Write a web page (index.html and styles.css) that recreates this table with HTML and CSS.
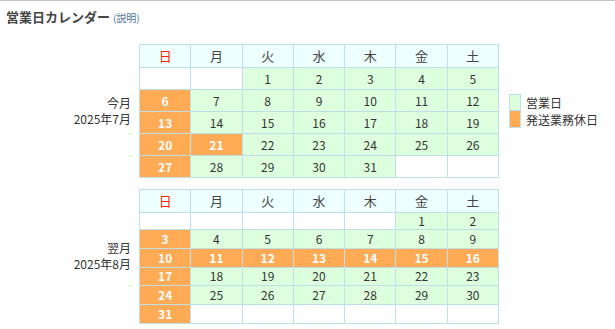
FILE: index.html
```html
<!DOCTYPE html>
<html lang="ja">
<head>
<meta charset="utf-8">
<title>営業日カレンダー</title>
<link rel="stylesheet" href="styles.css">
</head>
<body>
<div class="page">
  <h1 class="title">営業日カレンダー <span class="help">(説明)</span></h1>
  <div class="months">
    <div class="month">
      <div class="label">今月<br>2025年7月</div>
      <table class="cal july">
        <tr class="head"><th class="sun">日</th><th>月</th><th>火</th><th>水</th><th>木</th><th>金</th><th>土</th></tr>
        <tr><td></td><td></td><td class="biz">1</td><td class="biz">2</td><td class="biz">3</td><td class="biz">4</td><td class="biz">5</td></tr>
        <tr><td class="off">6</td><td class="biz">7</td><td class="biz">8</td><td class="biz">9</td><td class="biz">10</td><td class="biz">11</td><td class="biz">12</td></tr>
        <tr><td class="off">13</td><td class="biz">14</td><td class="biz">15</td><td class="biz">16</td><td class="biz">17</td><td class="biz">18</td><td class="biz">19</td></tr>
        <tr><td class="off">20</td><td class="off">21</td><td class="biz">22</td><td class="biz">23</td><td class="biz">24</td><td class="biz">25</td><td class="biz">26</td></tr>
        <tr><td class="off">27</td><td class="biz">28</td><td class="biz">29</td><td class="biz">30</td><td class="biz">31</td><td></td><td></td></tr>
      </table>
      <div class="legend">
        <div class="lg-row"><span class="sw sw-biz"></span><span>営業日</span></div>
        <div class="lg-row"><span class="sw sw-off"></span><span>発送業務休日</span></div>
      </div>
    </div>
    <div class="month">
      <div class="label">翌月<br>2025年8月</div>
      <table class="cal aug">
        <tr class="head"><th class="sun">日</th><th>月</th><th>火</th><th>水</th><th>木</th><th>金</th><th>土</th></tr>
        <tr class="short"><td></td><td></td><td></td><td></td><td></td><td class="biz">1</td><td class="biz">2</td></tr>
        <tr><td class="off">3</td><td class="biz">4</td><td class="biz">5</td><td class="biz">6</td><td class="biz">7</td><td class="biz">8</td><td class="biz">9</td></tr>
        <tr><td class="off">10</td><td class="off">11</td><td class="off">12</td><td class="off">13</td><td class="off">14</td><td class="off">15</td><td class="off">16</td></tr>
        <tr><td class="off">17</td><td class="biz">18</td><td class="biz">19</td><td class="biz">20</td><td class="biz">21</td><td class="biz">22</td><td class="biz">23</td></tr>
        <tr><td class="off">24</td><td class="biz">25</td><td class="biz">26</td><td class="biz">27</td><td class="biz">28</td><td class="biz">29</td><td class="biz">30</td></tr>
        <tr><td class="off">31</td><td></td><td></td><td></td><td></td><td></td><td></td></tr>
      </table>
    </div>
  </div>
</div>
</body>
</html>
```
FILE: styles.css
```css
html, body {
  margin: 0;
  padding: 0;
  background: #fff;
}
body {
  border-top: 1px solid #c4c4c4;
  font-family: "Noto Sans CJK JP", "Noto Sans", sans-serif;
  color: #333;
  font-size: 12px;
}
.page {
  padding: 6px 0 0 6px;
}
.title {
  margin: 0 0 16px 0;
  font-size: 13px;
  line-height: 20px;
  font-weight: bold;
  color: #444;
}
.help {
  font-size: 10px;
  font-weight: normal;
  color: #4f7397;
}
.months {
  display: flex;
  flex-direction: column;
  gap: 11px;
}
.month {
  display: flex;
  align-items: center;
}
.label {
  width: 125px;
  text-align: right;
  line-height: 16px;
  font-size: 12px;
  color: #333;
}
.cal {
  margin-left: 8px;
  width: 360px;
  border-collapse: collapse;
  table-layout: fixed;
  font-size: 12px;
}
.cal th, .cal td {
  border: 1px solid #bcdfe8;
  padding: 0;
  text-align: center;
  background: #fff;
  font-weight: normal;
  line-height: 14px;
}
.cal th {
  background: #eeffff;
  font-size: 13px;
  color: #444;
}
.cal th.sun {
  color: #ff2200;
}
.cal .head {
  height: 23px;
}
.july tr {
  height: 22px;
}
.july tr.head {
  height: 23px;
}
.aug tr {
  height: 18.8px;
}
.aug tr.head {
  height: 23px;
}
.aug tr.short {
  height: 17px;
}
.cal td.biz {
  background: #ddffdd;
  color: #333;
}
.cal td.off {
  background: #ffaa55;
  color: #fff;
  font-weight: bold;
}
.legend {
  margin-left: 10px;
  display: flex;
  flex-direction: column;
}
.lg-row {
  display: flex;
  align-items: center;
  gap: 5px;
  line-height: 16px;
  font-size: 12px;
  color: #333;
}
.sw {
  width: 10px;
  height: 15px;
  border: 1px solid #bcdfe8;
}
.lg-row + .lg-row .sw {
  border-top: none;
  height: 16px;
}
.sw-biz { background: #ddffdd; }
.sw-off { background: #ffaa55; }
```
